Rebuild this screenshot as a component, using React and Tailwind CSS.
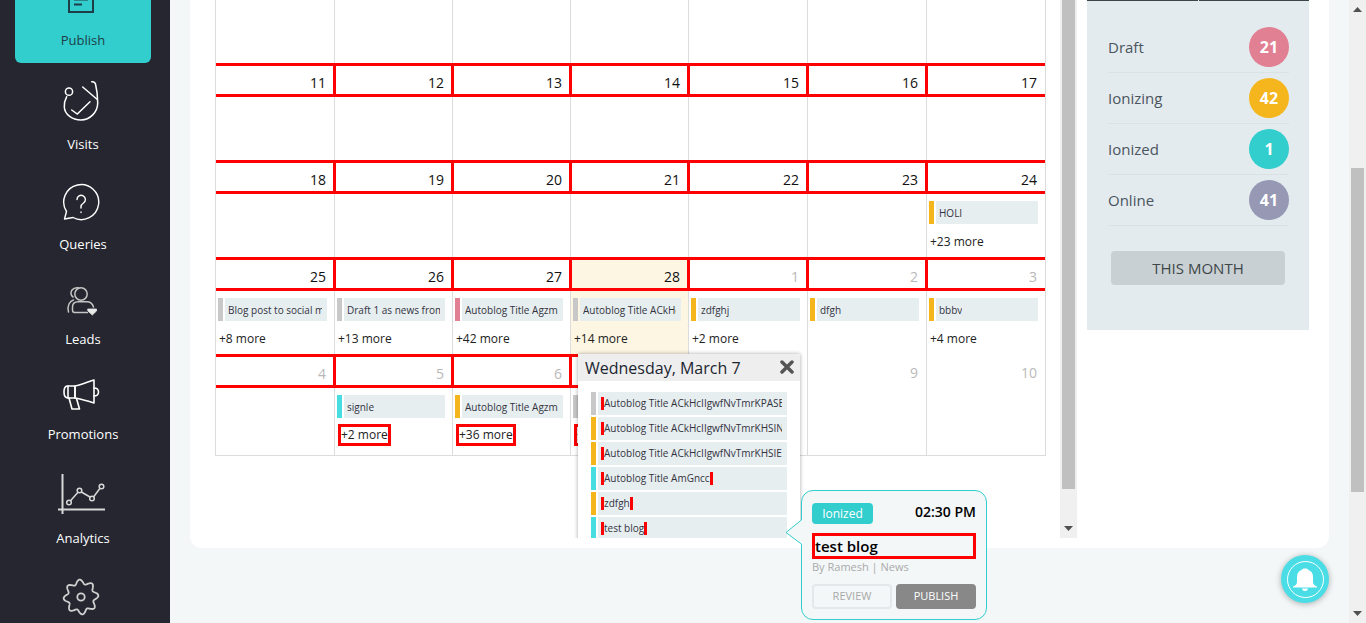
import React from "react";

const C = { grey: "bg-[#c8c8c8]", pink: "bg-[#e17f93]", yellow: "bg-[#f5b51c]", cyan: "bg-[#48dde0]" };

const gearPath = (() => {
  let d = "";
  for (let i = 0; i <= 240; i++) {
    const t = (i / 240) * Math.PI * 2;
    const r = 15.2 + 2.2 * Math.cos(8 * t + 0.7);
    d += (i ? "L" : "M") + (19 + r * Math.cos(t)).toFixed(2) + " " + (19 + r * Math.sin(t)).toFixed(2);
  }
  return d + "Z";
})();

const icons = {
  publish: (
    <svg width="26" height="14" viewBox="0 0 26 14" fill="none" stroke="#1f3d47" strokeWidth="2">
      <path d="M1 -6V13H25V-6" />
      <path d="M6 0.500H20M6 5.500H14" />
    </svg>
  ),
  visits: (
    <svg width="40" height="42" viewBox="0 0 40 42" fill="none" stroke="#fff" strokeWidth="1.5" strokeLinecap="round">
      <circle cx="8" cy="12.700" r="3.600" />
      <path d="M5.700 17.700C3.500 22 3 24 3.300 27.700C3.500 35 11 41 20 41C29 41 36.700 33 36.700 24C36.700 18 36.500 13 34.500 5C34 3 32.500 2.500 30.700 2.700" />
      <path d="M21.700 8L35.700 20" />
      <path d="M10.700 31L16.300 35L29 22.700" />
    </svg>
  ),
  queries: (
    <svg width="38" height="38" viewBox="0 0 38 38" fill="none" stroke="#fff" strokeWidth="1.4" strokeLinejoin="round" strokeLinecap="round">
      <path d="M2.500 36L4.500 28.500A17.500 17.500 0 1 1 11 34.500Z" />
      <path d="M15 16.500A4.200 4.200 0 1 1 21.500 20C20 21 19 22 19 23.700V25" />
      <path d="M19 29V29.500" />
    </svg>
  ),
  leads: (
    <svg width="32" height="31" viewBox="0 0 32 31" fill="none" stroke="#c4c4c4" strokeWidth="1.5" strokeLinecap="round">
      <circle cx="16" cy="9" r="6.200" />
      <path d="M8 12C5.500 10.500 5.500 7 7 5C8.500 3 11.500 2.500 13.500 2.800" />
      <path d="M22.500 27.500H9.500C8 27.500 7.500 26.500 7.500 25V22C7.500 18.500 10 16.700 13 16.700H22C25 16.700 27.500 18.500 28.500 22" />
      <path d="M3.500 27C3 25 3 21 4 19C5 17 6.500 15.500 8.500 15" />
      <path d="M23 24H31.500V26L27.300 30L23 26Z" fill="#e8e8e8" stroke="#e8e8e8" strokeWidth="0.800" strokeLinejoin="round" />
    </svg>
  ),
  promotions: (
    <svg width="38" height="33" viewBox="0 0 38 33" fill="none" stroke="#fff" strokeWidth="1.6" strokeLinejoin="round" strokeLinecap="round">
      <path d="M13 8H6C3.500 8 2 9 2 14C2 19 3.500 20 6 20H13Z" />
      <path d="M13 8C20 7 25 4 32 2V25C25 23 20 21 13 20Z" />
      <path d="M6 8V20" />
      <path d="M32 10C35 10 36.500 12 36.500 14C36.500 16 35 18 32 18" />
      <path d="M7 20L10 31H17.500L14.500 20.500" />
    </svg>
  ),
  analytics: (
    <svg width="48" height="41" viewBox="-1 0 48 41" fill="none" stroke="#d8d8d8" strokeWidth="1.5">
      <path d="M4.500 0V40" strokeWidth="2" />
      <path d="M0 35.500H47" strokeWidth="2" />
      <circle cx="11" cy="28.500" r="2.300" />
      <circle cx="21.500" cy="16.500" r="2.300" />
      <circle cx="34" cy="24.500" r="2.300" />
      <circle cx="43.500" cy="12.500" r="2.300" />
      <path d="M12.500 26.800L20 18.200M23.300 18L32 23M35.700 22.700L42 14.300" />
    </svg>
  ),
};

function NavItem({ icon, label, h, active }) {
  return (
    <div
      className={
        (active ? "bg-[#32cdcd] rounded-b-md pb-[14px] text-[#1f3d47] font-medium " : "pb-[10px] text-white ") +
        "flex flex-col items-center justify-end shrink-0"
      }
      style={{ height: h }}
    >
      <div className="flex justify-center -ml-[4px]">{icons[icon]}</div>
      <div className={(active ? "mt-[18px] " : "mt-[14px] ") + "h-[18px] leading-[18px] text-[13px]"}>{label}</div>
    </div>
  );
}

function Sidebar() {
  return (
    <div className="w-[170px] shrink-0 bg-[#252630] pl-[15px] pr-[19px] overflow-hidden flex flex-col">
      <NavItem icon="publish" label="Publish" h={63} active />
      <NavItem icon="visits" label="Visits" h={100} />
      <NavItem icon="queries" label="Queries" h={100} />
      <NavItem icon="leads" label="Leads" h={95} />
      <NavItem icon="promotions" label="Promotions" h={95} />
      <NavItem icon="analytics" label="Analytics" h={104} />
      <div className="flex justify-center pt-[21px] -ml-[4px]">
        <svg width="38" height="38" viewBox="0 0 38 38" fill="none" stroke="#cfcfcf" strokeWidth="1.8">
          <path d={gearPath} />
          <circle cx="19" cy="19" r="3.700" />
        </svg>
      </div>
    </div>
  );
}

function Chip({ color, text }) {
  return (
    <div className="flex h-[23px] ml-[2px] mr-[7px] gap-[2px]">
      <div className={"w-[5px] shrink-0 " + color} />
      <div className="flex-1 min-w-0 bg-[#e7eef0] pl-[3px] pr-[5px] flex items-center">
        <div className="overflow-hidden whitespace-nowrap text-[10px] leading-[14px] text-[#33333f]">{text}</div>
      </div>
    </div>
  );
}

function Cell({ first, n, dim, red = true, today, ev, more, boxed }) {
  return (
    <div className={"border-r border-[#dcdcdc] min-w-0 " + (today ? "bg-[#fdf6e3]" : "")}>
      <div
        className={
          "h-[34px] -mt-px relative " +
          (red ? "border-y-[3px] border-[#f00] " + (first ? "" : "border-l-[3px] -ml-[2px]") : "")
        }
      >
        <div
          className={
            "text-right pr-[8px] text-[14px] leading-[20px] " +
            (red ? "pt-[7px] " : "pt-[9px] ") +
            (dim ? "text-[#b9b9b9]" : "text-[#111] font-medium")
          }
        >
          {n}
        </div>
      </div>
      {ev && (
        <div className="pt-[7px]">
          <Chip color={ev[0]} text={ev[1]} />
        </div>
      )}
      {more &&
        (boxed ? (
          <div className="mt-[6px] ml-[3px] flex">
            <span className="h-[22px] border-[3px] border-[#f00] text-[12px] leading-[16px] text-[#222]">{more}</span>
          </div>
        ) : (
          <div className="mt-[7px] ml-[3px] h-[22px] flex items-center text-[12px] text-[#222]">{more}</div>
        ))}
    </div>
  );
}

const weeks = [
  { h: 97, cells: [{ n: 11 }, { n: 12 }, { n: 13 }, { n: 14 }, { n: 15 }, { n: 16 }, { n: 17 }] },
  {
    h: 97,
    cells: [{ n: 18 }, { n: 19 }, { n: 20 }, { n: 21 }, { n: 22 }, { n: 23 }, { n: 24, ev: [C.yellow, "HOLI"], more: "+23 more" }],
  },
  {
    h: 97,
    cells: [
      { n: 25, ev: [C.grey, "Blog post to social media"], more: "+8 more" },
      { n: 26, ev: [C.grey, "Draft 1 as news from admin"], more: "+13 more" },
      { n: 27, ev: [C.pink, "Autoblog Title Agzm"], more: "+42 more" },
      { n: 28, today: true, ev: [C.grey, "Autoblog Title ACkHcIIgwf"], more: "+14 more" },
      { n: 1, dim: true, ev: [C.yellow, "zdfghj"], more: "+2 more" },
      { n: 2, dim: true, ev: [C.yellow, "dfgh"] },
      { n: 3, dim: true, ev: [C.yellow, "bbbv"], more: "+4 more" },
    ],
  },
  {
    h: 100,
    cells: [
      { n: 4, dim: true },
      { n: 5, dim: true, ev: [C.cyan, "signle"], more: "+2 more", boxed: true },
      { n: 6, dim: true, ev: [C.yellow, "Autoblog Title Agzm"], more: "+36 more", boxed: true },
      { n: 7, dim: true, ev: [C.grey, "Autoblog Title"], more: "+5 more", boxed: true },
      { n: 8, dim: true, red: false },
      { n: 9, dim: true, red: false },
      { n: 10, dim: true, red: false },
    ],
  },
];

function Calendar() {
  return (
    <div className="w-[831px] shrink-0 self-start border-l border-b border-[#dcdcdc] font-normal">
      <div className="grid grid-cols-[119px_118px_118px_118px_119px_119px_119px] h-[64px]">
        {[0, 1, 2, 3, 4, 5, 6].map((i) => (
          <div key={i} className="border-r border-[#dcdcdc]" />
        ))}
      </div>
      {weeks.map((w, i) => (
        <div key={i} className="grid grid-cols-[119px_118px_118px_118px_119px_119px_119px]" style={{ height: w.h }}>
          {w.cells.map((c, j) => (
            <Cell key={j} first={j === 0} {...c} />
          ))}
        </div>
      ))}
    </div>
  );
}

function DayPopover() {
  const rows = [
    [C.grey, "Autoblog Title ACkHcIIgwfNvTmrKPASEDFGH"],
    [C.yellow, "Autoblog Title ACkHcIIgwfNvTmrKHSINOPQR"],
    [C.yellow, "Autoblog Title ACkHcIIgwfNvTmrKHSIEFGHI"],
    [C.cyan, "Autoblog Title AmGncc"],
    [C.yellow, "zdfgh"],
    [C.cyan, "test blog"],
  ];
  return (
    <div className="absolute left-[363px] top-[354px] w-[222px] h-[200px] bg-white shadow-[0_0_4px_rgba(0,0,0,0.35)]">
      <div className="h-[27px] bg-[#eeeeee] flex items-center justify-between pl-[7px] pr-[6px]">
        <span className="text-[16px] font-medium text-[#1c2530] leading-[27px] pt-[2px]">Wednesday, March 7</span>
        <svg width="14" height="14" viewBox="0 0 14 14" stroke="#555" strokeWidth="3.500" strokeLinecap="round" className="-mt-[2px]">
          <path d="M2 2L12 12M12 2L2 12" />
        </svg>
      </div>
      <div className="pt-[11px] pl-[13px] pr-[13px] flex flex-col gap-[2px]">
        {rows.map((r, i) => (
          <div key={i} className="flex gap-[2px] h-[23px] shrink-0">
            <div className={"w-[5px] shrink-0 " + r[0]} />
            <div className="flex-1 min-w-0 bg-[#e7eef0] pl-[3px] pr-[5px] flex items-center">
              <div className="overflow-hidden whitespace-nowrap text-[10px] leading-[13px] text-[#33333f]">
                <span className="inline-block h-[13px] border-x-[3px] border-[#f00]">{r[1]}</span>
              </div>
            </div>
          </div>
        ))}
      </div>
    </div>
  );
}

function Scrollbar({ thumbTop, thumbH, className = "" }) {
  return (
    <div className={"w-[17px] shrink-0 bg-[#f0f0f0] flex flex-col items-center " + className}>
      <svg width="9" height="5" viewBox="0 0 9 5" className="mt-[7px] shrink-0">
        <path d="M4.500 0L9 5H0Z" fill="#505050" />
      </svg>
      <div className="w-[13px] bg-[#c0c0c0] shrink-0" style={{ marginTop: thumbTop, height: thumbH }} />
      <div className="flex-1" />
      <svg width="9" height="5" viewBox="0 0 9 5" className="mb-[7px] shrink-0">
        <path d="M4.500 5L9 0H0Z" fill="#505050" />
      </svg>
    </div>
  );
}

function Stats() {
  const rows = [
    ["Draft", "21", "bg-[#e17f93]"],
    ["Ionizing", "42", "bg-[#f5b51c]"],
    ["Ionized", "1", "bg-[#32cdcd]"],
    ["Online", "41", "bg-[#9698b4]"],
  ];
  return (
    <div className="w-[222px] h-[330px] bg-[#e4ebee] shrink-0">
      <div className="flex gap-px">
        <div className="h-px flex-1 bg-[#3b4747]" />
        <div className="h-px flex-1 bg-[#3b4747]" />
      </div>
      <div className="pt-[21px] px-[21px] pr-[20px]">
        {rows.map((r) => (
          <div key={r[0]} className="h-[51px] border-b border-[#dbe2e6] flex items-center justify-between pb-[1px]">
            <span className="text-[15px] text-[#4a5560] pt-[2px]">{r[0]}</span>
            <span className={"w-[40px] h-[40px] rounded-full flex items-center justify-center text-white font-bold text-[16px] " + r[2]}>
              {r[1]}
            </span>
          </div>
        ))}
      </div>
      <div className="mt-[25px] mx-[24px] h-[34px] rounded-[4px] bg-[#c9d0d3] flex items-center justify-center text-[15px] font-medium text-[#3d4648]">
        THIS MONTH
      </div>
    </div>
  );
}

function EventTip() {
  return (
    <div className="absolute left-[801px] top-[490px] w-[186px] h-[130px] bg-[#f3f7f8] border border-[#32cdcd] rounded-[12px] pt-[12px] px-[10px] z-10">
      <svg width="18" height="26" viewBox="0 0 18 26" className="absolute left-[-17px] top-[28px]">
        <path d="M17 0.500L1 13.500L17 25.500" fill="#f3f7f8" stroke="#32cdcd" strokeWidth="1" />
        <rect x="16.500" y="1" width="1.500" height="24" fill="#f3f7f8" />
      </svg>
      <div className="flex items-start justify-between">
        <span className="w-[61px] h-[21px] rounded-[4px] bg-[#32cdcd] text-white text-[12px] flex items-center justify-center">Ionized</span>
        <span className="text-[14px] font-semibold text-black leading-[18px]">02:30 PM</span>
      </div>
      <div className="mt-[9px] h-[26px] border-[3px] border-[#f00] text-[15px] font-semibold text-black leading-[20px]">test blog</div>
      <div className="h-[16px] leading-[16px] text-[11px] text-[#aaaaaa]">By Ramesh | News</div>
      <div className="mt-[9px] flex gap-[4px]">
        <div className="w-[80px] h-[25px] rounded-[4px] border-2 border-[#e4e8ea] text-[#a8a8a8] text-[11px] flex items-center justify-center">REVIEW</div>
        <div className="w-[80px] h-[25px] rounded-[4px] bg-[#888888] text-white text-[11px] flex items-center justify-center">PUBLISH</div>
      </div>
    </div>
  );
}

function Bell() {
  return (
    <div className="absolute left-[1281px] top-[555px] w-[48px] h-[48px] rounded-full bg-[#4adde6] shadow-[0_1px_6px_rgba(0,0,0,0.3)] flex items-center justify-center z-10">
      <div className="w-[37px] h-[37px] rounded-full border-[1.500px] border-white flex items-center justify-center">
        <svg width="26" height="25" viewBox="0 0 26 25" fill="#fff">
          <path d="M13 1.500C15 1.500 16 2.200 16.500 3C19.500 4 21 6.500 21 10V15C21 17 22.500 18.500 25 19.500V20.500H1V19.500C3.500 18.500 5 17 5 15V10C5 6.500 6.500 4 9.500 3C10 2.200 11 1.500 13 1.500Z" />
          <path d="M10 21.500H16C15.500 23.500 14.500 24 13 24C11.500 24 10.500 23.500 10 21.500Z" />
        </svg>
      </div>
    </div>
  );
}

export default function App() {
  return (
    <div className="relative flex w-[1366px] h-[623px] overflow-hidden bg-[#f3f7f8] font-['Open_Sans',sans-serif]">
      <Sidebar />
      <div className="flex-1 min-w-0 px-[20px]">
        <div className="h-[548px] bg-white rounded-b-[12px] flex items-start pl-[25px]">
          <div className="relative flex h-[538px] overflow-hidden shrink-0 w-[862px]">
            <Calendar />
            <div className="w-[14px] shrink-0" />
            <Scrollbar thumbTop={-12} thumbH={489} />
            <DayPopover />
          </div>
          <div className="ml-[10px]">
            <Stats />
          </div>
        </div>
      </div>
      <Scrollbar thumbTop={156} thumbH={324} />
      <EventTip />
      <Bell />
    </div>
  );
}
